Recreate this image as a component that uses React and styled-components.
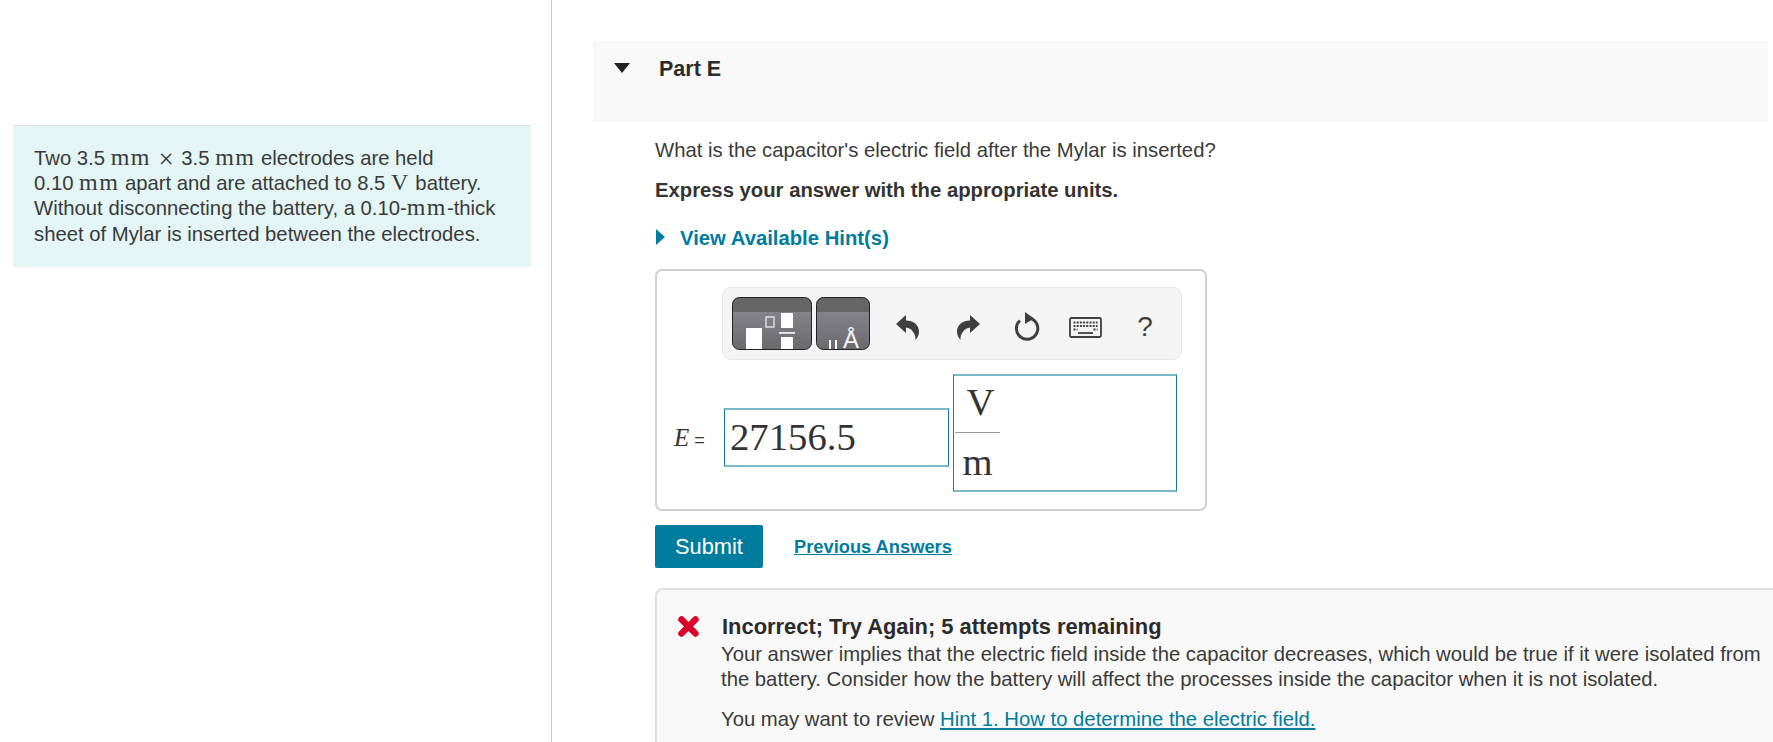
import styled, { createGlobalStyle } from "styled-components";

const GlobalStyle = createGlobalStyle`
    html, body {
        margin: 0;
        padding: 0;
        background: #fff;
    }
    body {
        font-family: "Liberation Sans", Arial, sans-serif;
        color: #333;
    }
`;

const Page = styled.div`
    display: flex;
    width: 1773px;
    height: 742px;
    overflow: hidden;
`;

const LeftColumn = styled.aside`
    flex: 0 0 552px;
    box-sizing: border-box;
    padding: 125px 20px 0 13px;
    border-right: 1px solid #c4ccd8;
`;

const Intro = styled.div`
    box-sizing: border-box;
    height: 142px;
    padding: 20px 20px 0 21px;
    background: #e4f5f6;
    border-top: 1px solid #d8e2e4;
    font-size: 20.3px;
    line-height: 25.2px;
    color: #3a3a3a;
`;

const Math = styled.span`
    font-family: "Liberation Serif", serif;
    font-size: 24px;
    line-height: 0;
    letter-spacing: 1.4px;
`;

const Times = styled.span`
    margin: 0 2px;
    font-family: "Liberation Serif", serif;
    font-size: 27px;
    line-height: 0;
    vertical-align: -3px;
`;

const RightColumn = styled.main`
    flex: 1;
    min-width: 0;
    padding: 41px 5px 0 41px;
`;

const PartHeader = styled.header`
    display: flex;
    align-items: flex-start;
    box-sizing: border-box;
    height: 81px;
    padding: 16px 0 0 21px;
    background: #f8f8f8;
`;

const PartArrow = styled.span`
    width: 0;
    height: 0;
    margin: 6px 29px 0 0;
    border-left: 8.5px solid transparent;
    border-right: 8.5px solid transparent;
    border-top: 10px solid #222;
`;

const PartTitle = styled.h2`
    margin: 0;
    font-size: 21.5px;
    line-height: 24px;
    font-weight: bold;
    color: #2b2b2b;
`;

const Content = styled.section`
    padding: 16px 0 0 62px;
`;

const Question = styled.p`
    margin: 0;
    font-size: 20.3px;
    line-height: 24px;
    color: #3a3a3a;
`;

const Instruction = styled.p`
    margin: 16px 0 0;
    font-size: 20.3px;
    line-height: 24px;
    font-weight: bold;
    color: #333;
`;

const HintToggle = styled.div`
    display: flex;
    align-items: center;
    margin-top: 24px;
    font-size: 20.3px;
    line-height: 24px;
    font-weight: bold;
    color: #007c9e;
`;

const HintArrow = styled.span`
    width: 0;
    height: 0;
    margin: -2px 15px 0 1px;
    border-top: 8px solid transparent;
    border-bottom: 8px solid transparent;
    border-left: 9px solid #007c9e;
`;

const AnswerBox = styled.div`
    box-sizing: border-box;
    width: 552px;
    height: 242px;
    margin-top: 19px;
    padding: 16px 0 0 17px;
    border: 2px solid #d0d0d0;
    border-radius: 7px;
`;

const Toolbar = styled.div`
    display: flex;
    align-items: center;
    box-sizing: border-box;
    width: 460px;
    height: 73px;
    margin-left: 48px;
    padding: 0 9px;
    background: #f4f4f4;
    border: 1px solid #e6e6e6;
    border-radius: 9px;
`;

const TemplateButton = styled.svg`
    display: block;
    flex: none;
    margin-right: 4px;
    overflow: visible;
`;

const ToolIcon = styled.span`
    display: flex;
    flex: none;
    align-items: center;
    justify-content: center;
    width: ${(p) => p.$width}px;
    margin: 7px 0 0 ${(p) => p.$left}px;
    color: #3f3f3f;
    font-size: 28px;
`;

const AnswerRow = styled.div`
    display: flex;
    align-items: center;
    margin-top: 14px;
`;

const Variable = styled.span`
    width: 50px;
    margin-top: 9px;
    font-size: 18px;
    color: #333;
    em {
        margin-right: 5px;
        font-family: "Liberation Serif", serif;
        font-size: 25px;
    }
`;

const ValueInput = styled.div`
    box-sizing: border-box;
    width: 225px;
    height: 59px;
    margin-top: 9px;
    padding: 0 5px;
    border: 1px solid #0e7f9f;
    border-top: 2px solid #7ab9ca;
    border-bottom: 2px solid #7ab9ca;
    font-family: "Liberation Serif", serif;
    font-size: 38.7px;
    line-height: 55px;
    color: #333;
`;

const UnitInput = styled.div`
    box-sizing: border-box;
    width: 224px;
    height: 118px;
    margin-left: 4px;
    padding-left: 1px;
    border: 1px solid #0e7f9f;
    border-top: 2px solid #7ab9ca;
    border-bottom: 2px solid #7ab9ca;
`;

const Fraction = styled.div`
    display: flex;
    flex-direction: column;
    align-items: center;
    width: 45px;
    font-family: "Liberation Serif", serif;
    font-size: 38.7px;
    color: #333;
`;

const Numerator = styled.span`
    align-self: stretch;
    box-sizing: border-box;
    height: 57px;
    padding-left: 6px;
    border-bottom: 1px solid #999;
    line-height: 52px;
    text-align: center;
`;

const Denominator = styled.span`
    height: 58px;
    line-height: 58px;
`;

const ActionRow = styled.div`
    display: flex;
    align-items: center;
    margin-top: 14px;
`;

const SubmitButton = styled.button`
    width: 108px;
    height: 43px;
    padding: 0;
    border: 0;
    border-radius: 2px;
    background: #007c9e;
    color: #fff;
    font-family: inherit;
    font-size: 21.8px;
`;

const PreviousLink = styled.a`
    margin: 1px 0 0 31px;
    font-size: 18.3px;
    font-weight: bold;
    color: #007c9e;
    text-decoration: underline;
`;

const Feedback = styled.div`
    display: flex;
    box-sizing: border-box;
    height: 200px;
    margin: 20px -30px 0 0;
    padding: 24px 0 0 20px;
    background: #f8f8f8;
    border: 2px solid #dedede;
    border-radius: 8px;
`;

const ErrorMark = styled.svg`
    flex: none;
    margin: 1px 21px 0 0;
`;

const FeedbackBody = styled.div`
    width: 1040px;
    font-size: 20.3px;
    line-height: 25px;
    color: #3a3a3a;
`;

const FeedbackTitle = styled.div`
    margin: 0 0 3px 1px;
    font-size: 21.9px;
    font-weight: bold;
    color: #2b2b2b;
`;

const FeedbackText = styled.p`
    margin: 0;
`;

const FeedbackHint = styled.p`
    margin: 15px 0 0;
`;

const HintLink = styled.a`
    color: #007c9e;
    text-decoration: underline;
`;

const TemplatesIcon = () => (
    <TemplateButton width="80" height="53" viewBox="0 0 80 53">
        <defs>
            <linearGradient id="tplA" x1="0" y1="0" x2="0" y2="1">
                <stop offset="0" stopColor="#8e8d93" />
                <stop offset="1" stopColor="#6a696e" />
            </linearGradient>
            <clipPath id="tplClipA">
                <rect x="0.5" y="0.5" width="79" height="52" rx="7" />
            </clipPath>
        </defs>
        <g clipPath="url(#tplClipA)">
            <rect width="80" height="53" fill="url(#tplA)" />
            <rect width="80" height="15" fill="#666" />
            <rect x="14" y="31" width="16" height="22" fill="#fff" />
            <rect x="34" y="20" width="8" height="10" fill="none" stroke="#ddd" strokeWidth="1.5" />
            <rect x="49" y="16" width="12" height="15" fill="#fff" />
            <rect x="47" y="35" width="16" height="1.8" fill="#eee" />
            <rect x="49" y="40" width="12" height="13" fill="#fff" />
        </g>
        <rect x="0.5" y="0.5" width="79" height="52" rx="7" fill="none" stroke="#222" />
    </TemplateButton>
);

const SymbolsIcon = () => (
    <TemplateButton width="54" height="53" viewBox="0 0 54 53">
        <defs>
            <clipPath id="tplClipB">
                <rect x="0.5" y="0.5" width="53" height="52" rx="7" />
            </clipPath>
        </defs>
        <g clipPath="url(#tplClipB)">
            <rect width="54" height="53" fill="url(#tplA)" />
            <rect width="54" height="15" fill="#666" />
            <rect x="13" y="43" width="2" height="10" fill="#fff" />
            <rect x="19" y="43" width="2" height="10" fill="#fff" />
        </g>
        <text x="35" y="51" textAnchor="middle" fontFamily="Liberation Sans" fontSize="24" fill="#f4f4f4">Å</text>
        <rect x="0.5" y="0.5" width="53" height="52" rx="7" fill="none" stroke="#222" />
    </TemplateButton>
);

const UndoIcon = ({ flip }) => (
    <svg width="23" height="25" viewBox="0 0 23 25" style={flip ? { transform: "scaleX(-1)" } : undefined}>
        <path d="M0 9 L10 0 V5.5 C17.5 5.5 23 10 23 16.5 C23 20 21.5 23 19.5 25 C20 19 15.5 13 10 12.5 V18 Z" fill="#3f3f3f" />
    </svg>
);

const ResetIcon = () => (
    <svg width="26" height="30" viewBox="0 0 26 30">
        <path d="M16 6.2 A10.7 10.7 0 1 1 6 8.5" fill="none" stroke="#3f3f3f" strokeWidth="3" />
        <path d="M11 0 L20 6.5 L11 12 Z" fill="#3f3f3f" />
    </svg>
);

const KeyboardIcon = () => (
    <svg width="33" height="21" viewBox="0 0 33 21">
        <rect x="1" y="1" width="31" height="19" rx="1.5" fill="#f4f4f4" stroke="#3f3f3f" strokeWidth="1.8" />
        <path d="M4.5 5.5h24M4.5 9h24M4.5 12.5h4M24.5 12.5h4" stroke="#3f3f3f" strokeWidth="1.8" strokeDasharray="2 1.2" fill="none" />
        <path d="M9 16h15" stroke="#3f3f3f" strokeWidth="1.8" fill="none" />
    </svg>
);

const App = () => {
    return (
        <Page>
            <GlobalStyle />
            <LeftColumn>
                <Intro>
                    Two 3.5 <Math>mm</Math> <Times>×</Times> 3.5 <Math>mm</Math> electrodes are held<br />
                    0.10 <Math>mm</Math> apart and are attached to 8.5 <Math>V</Math> battery.<br />
                    Without disconnecting the battery, a 0.10-<Math>mm</Math>-thick<br />
                    sheet of Mylar is inserted between the electrodes.
                </Intro>
            </LeftColumn>
            <RightColumn>
                <PartHeader>
                    <PartArrow />
                    <PartTitle>Part E</PartTitle>
                </PartHeader>
                <Content>
                    <Question>What is the capacitor's electric field after the Mylar is inserted?</Question>
                    <Instruction>Express your answer with the appropriate units.</Instruction>
                    <HintToggle>
                        <HintArrow />
                        View Available Hint(s)
                    </HintToggle>
                    <AnswerBox>
                        <Toolbar>
                            <TemplatesIcon />
                            <SymbolsIcon />
                            <ToolIcon $width={23} $left={22}><UndoIcon /></ToolIcon>
                            <ToolIcon $width={23} $left={38}><UndoIcon flip /></ToolIcon>
                            <ToolIcon $width={26} $left={34}><ResetIcon /></ToolIcon>
                            <ToolIcon $width={33} $left={29}><KeyboardIcon /></ToolIcon>
                            <ToolIcon $width={16} $left={35}>?</ToolIcon>
                        </Toolbar>
                        <AnswerRow>
                            <Variable><em>E</em>=</Variable>
                            <ValueInput>27156.5</ValueInput>
                            <UnitInput>
                                <Fraction>
                                    <Numerator>V</Numerator>
                                    <Denominator>m</Denominator>
                                </Fraction>
                            </UnitInput>
                        </AnswerRow>
                    </AnswerBox>
                    <ActionRow>
                        <SubmitButton>Submit</SubmitButton>
                        <PreviousLink>Previous Answers</PreviousLink>
                    </ActionRow>
                    <Feedback>
                        <ErrorMark width="23" height="23" viewBox="0 0 23 23">
                            <path d="M4.5 4.5 L18.5 18.5 M18.5 4.5 L4.5 18.5" stroke="#d9002c" strokeWidth="6.5" strokeLinecap="round" />
                        </ErrorMark>
                        <FeedbackBody>
                            <FeedbackTitle>Incorrect; Try Again; 5 attempts remaining</FeedbackTitle>
                            <FeedbackText>
                                Your answer implies that the electric field inside the capacitor decreases, which would be true if it were isolated from<br />
                                the battery. Consider how the battery will affect the processes inside the capacitor when it is not isolated.
                            </FeedbackText>
                            <FeedbackHint>
                                You may want to review <HintLink>Hint 1. How to determine the electric field.</HintLink>
                            </FeedbackHint>
                        </FeedbackBody>
                    </Feedback>
                </Content>
            </RightColumn>
        </Page>
    );
};

export default App;
